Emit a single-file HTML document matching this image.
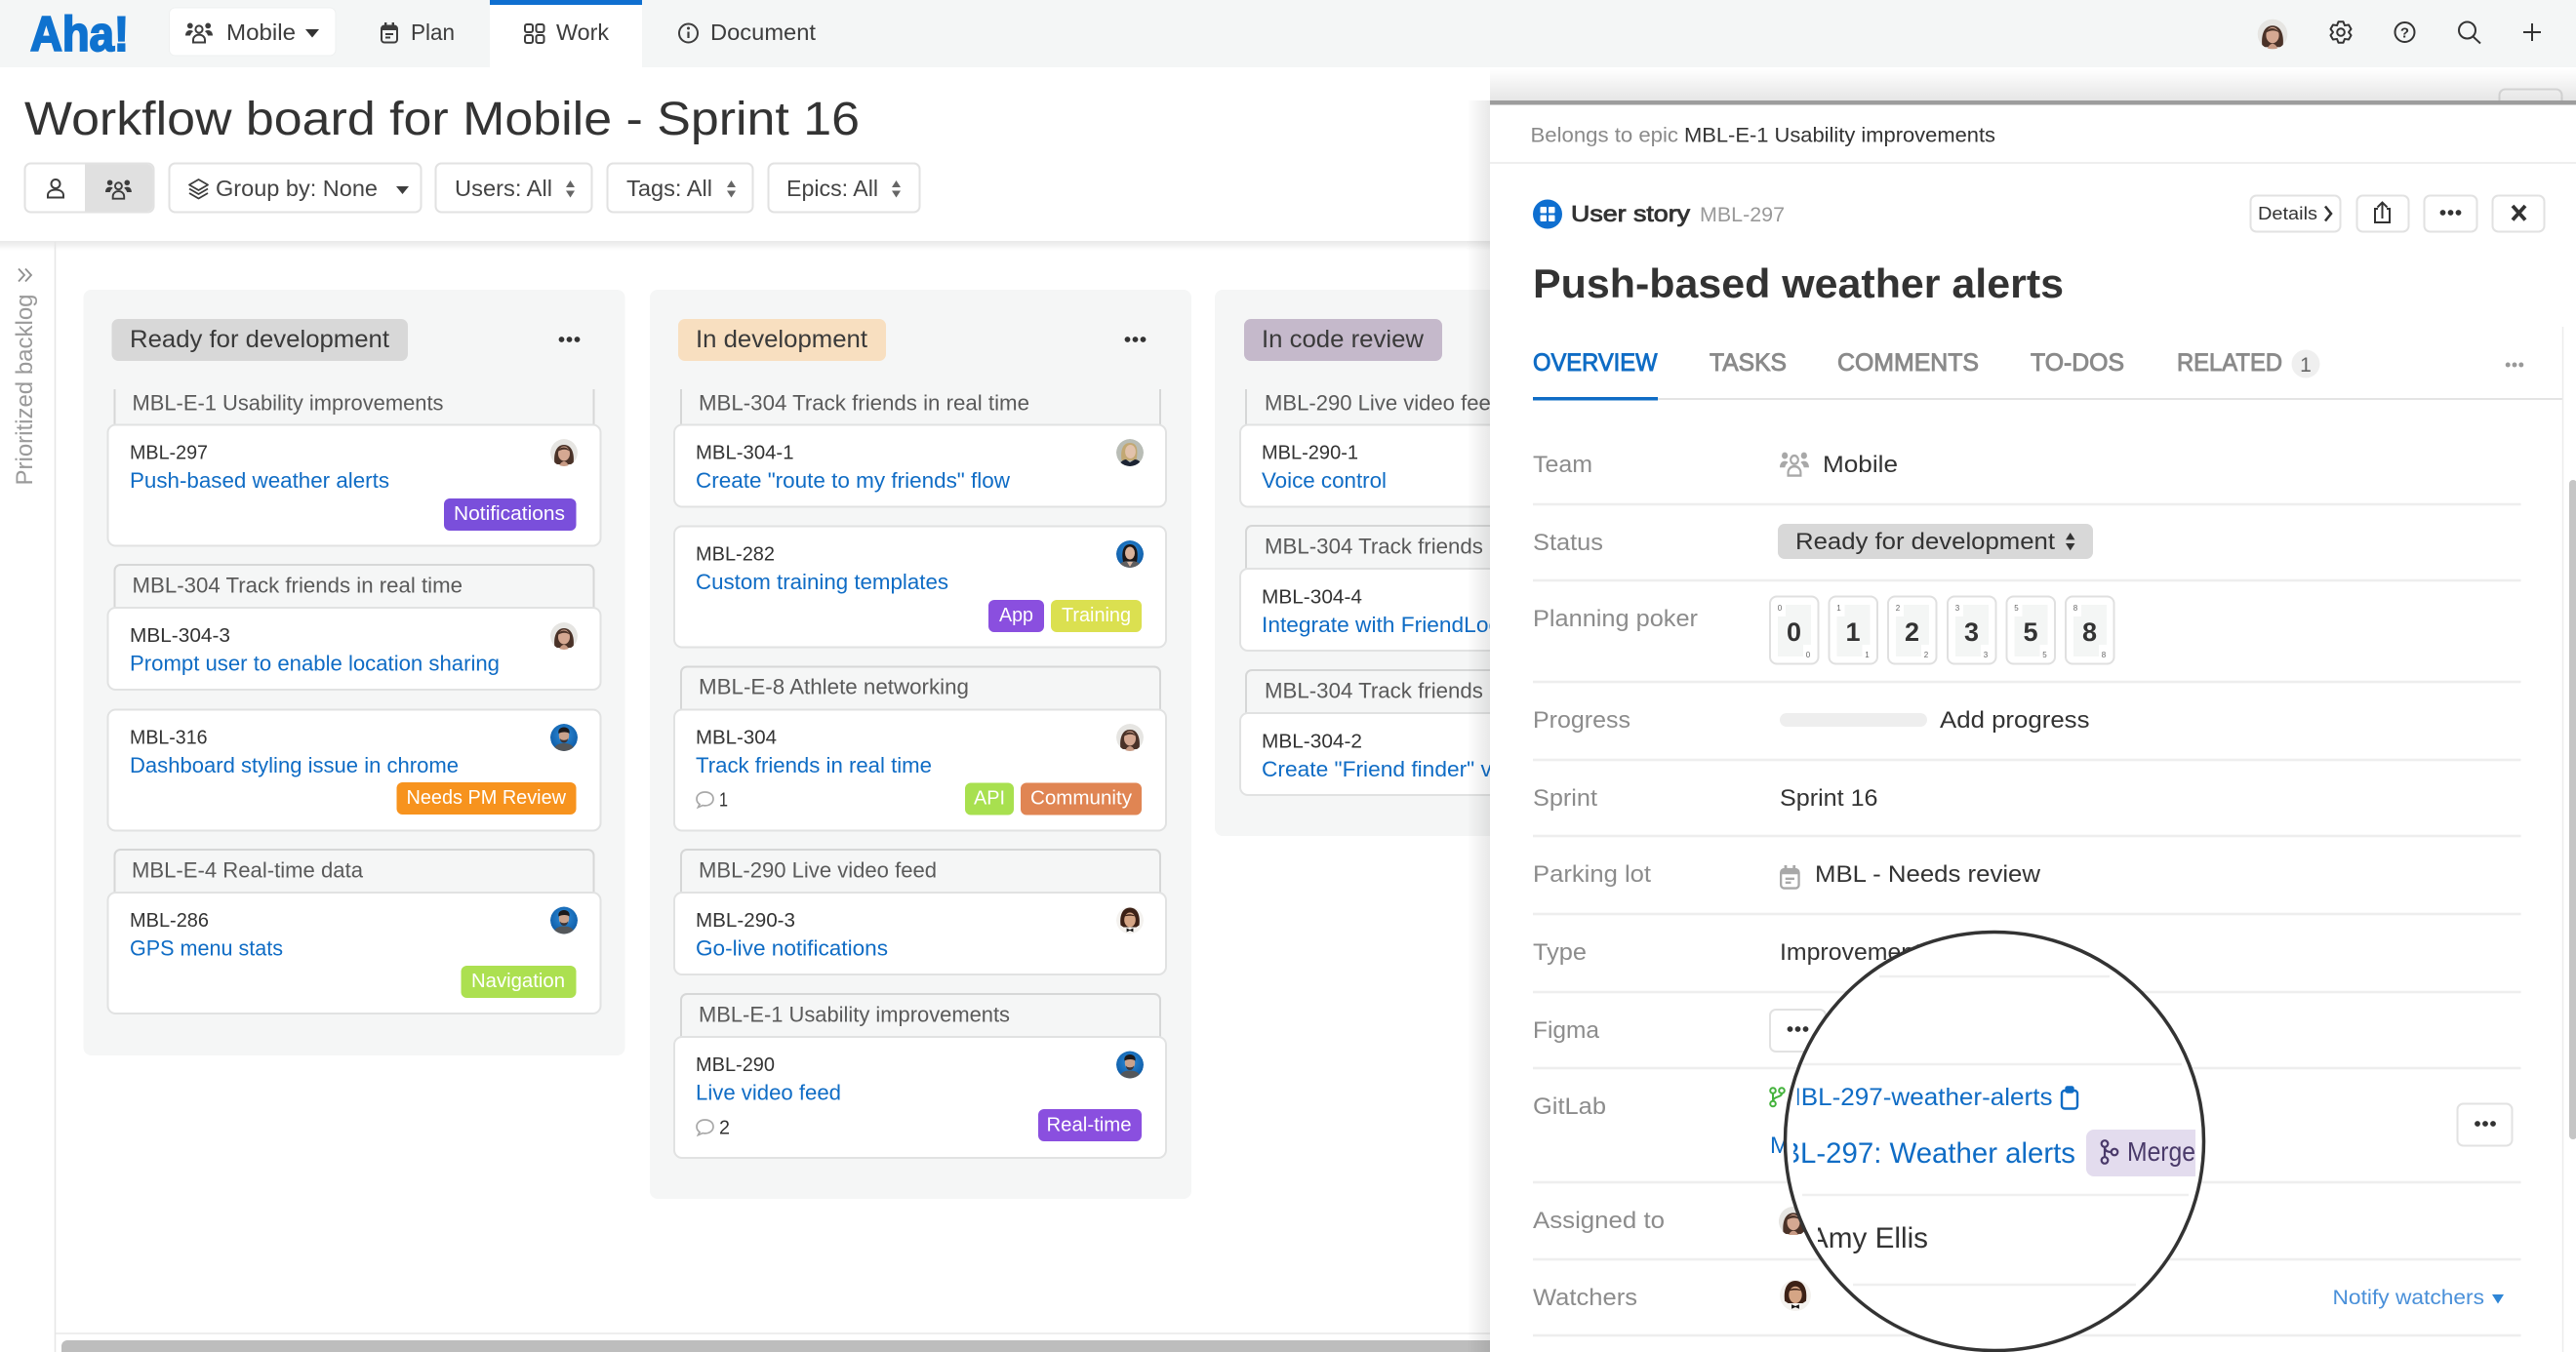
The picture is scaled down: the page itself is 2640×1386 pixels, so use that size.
<!DOCTYPE html>
<html lang="en"><head><meta charset="utf-8"><title>Workflow board for Mobile - Sprint 16</title>
<style>
html,body{margin:0;padding:0;width:2640px;height:1386px;overflow:hidden;background:#fff}
svg{display:block}
text{font-family:"Liberation Sans",Arial,sans-serif;fill:#333;white-space:pre}
.nav{font-size:23.5px;fill:#3d3d3d}
.tb{font-size:23.5px;fill:#444}
.ch{font-size:25px;fill:#3a3a3a}
.ep{font-size:22px;fill:#5a5a5a}
.id{font-size:20.5px;fill:#333}
.ln{font-size:22px;fill:#0f6cc5}
.tg{font-size:20px;fill:#fff}
.lb{font-size:24px;fill:#8c8c8c}
.vl{font-size:24.5px;fill:#333}
.tab{font-size:25px;fill:#8a8a8a;stroke:#8a8a8a;stroke-width:.9}
.c{fill:#fff;stroke:#e1e2e2;stroke-width:2}
.e{fill:#f5f6f6;stroke:#d6d7d7;stroke-width:2}
.b{fill:#fff;stroke:#e2e2e2;stroke-width:2}
.dv{stroke:#eeeeee;stroke-width:2.5}
.pk{fill:#fff;stroke:#e0e0e0;stroke-width:2}
.pi{fill:#f4f6f5}
.pn{font-size:27px;font-weight:700;fill:#333;text-anchor:middle}
.ps{font-size:8px;fill:#666;text-anchor:middle}
</style></head><body>
<svg xmlns="http://www.w3.org/2000/svg" width="2640" height="1386" viewBox="0 0 2640 1386">
<defs>
<linearGradient id="gs" x1="0" y1="0" x2="0" y2="1"><stop offset="0" stop-color="#000" stop-opacity=".09"/><stop offset="1" stop-color="#000" stop-opacity="0"/></linearGradient>
<linearGradient id="gl" x1="0" y1="0" x2="1" y2="0"><stop offset="0" stop-color="#000" stop-opacity="0"/><stop offset="1" stop-color="#000" stop-opacity=".09"/></linearGradient>
<linearGradient id="gt" x1="0" y1="0" x2="0" y2="1"><stop offset="0" stop-color="#000" stop-opacity="0"/><stop offset="1" stop-color="#000" stop-opacity=".1"/></linearGradient>
<radialGradient id="gb" cx=".5" cy=".4" r=".6"><stop offset="0" stop-color="#2f8fdc"/><stop offset="1" stop-color="#0d5aa5"/></radialGradient>
<clipPath id="av"><circle cx="0" cy="0" r="14"/></clipPath>
<clipPath id="mag"><circle cx="2044" cy="1170" r="214"/></clipPath>
<clipPath id="mrg"><rect x="2130" y="1150" width="120" height="64"/></clipPath>
<clipPath id="avcut"><rect x="1815" y="1230" width="60" height="36"/></clipPath>
<clipPath id="ln1"><rect x="1842" y="1100" width="300" height="50"/></clipPath>
<clipPath id="ln2"><rect x="1838" y="1155" width="300" height="50"/></clipPath>
<clipPath id="ln3"><rect x="1863" y="1250" width="200" height="45"/></clipPath>

<g id="d"><circle cx="-8" cy="0" r="2.9" fill="currentColor"/><circle cx="0" cy="0" r="2.9" fill="currentColor"/><circle cx="8" cy="0" r="2.9" fill="currentColor"/></g>

<g id="team" fill="currentColor"><circle cx="14" cy="7" r="3.6" fill="none" stroke="currentColor" stroke-width="2"/><path d="M8 20.5v-2.5c0-3.2 2.6-5.4 6-5.4s6 2.2 6 5.4v2.5z" fill="none" stroke="currentColor" stroke-width="2"/><circle cx="4.8" cy="3.4" r="2.9"/><circle cx="23.2" cy="3.4" r="2.9"/><path d="M0 13.5c0-3.4 2-5.500 4.8-5.500 1.300 0 2.400.4 3.200 1.200-1.600 1.100-2.600 2.600-3.100 4.300z"/><path d="M28 13.500c0-3.400-2-5.500-4.800-5.500-1.300 0-2.400.4-3.200 1.200 1.600 1.100 2.600 2.600 3.100 4.300z"/></g>

<g id="cal"><rect x="1" y="3.5" width="16" height="17" rx="3" fill="none" stroke="currentColor" stroke-width="2"/><path d="M1 8V6.500a3 3 0 0 1 3-3h10a3 3 0 0 1 3 3V8z" fill="currentColor"/><rect x="4" y="0" width="2.400" height="4" fill="currentColor"/><rect x="11.600" y="0" width="2.400" height="4" fill="currentColor"/><path d="M5 12h8M5 15.500h5" stroke="currentColor" stroke-width="2" fill="none"/></g>

<g id="sort" fill="currentColor"><path d="M0 7L4.500 0 9 7z"/><path d="M0 10.500L4.500 17.500 9 10.500z"/></g>

<g id="bubble"><path d="M10 1C5 1 1.500 4 1.500 8c0 2.400 1.200 4.300 3 5.500L3 16.600l4.600-2c.8.2 1.600.3 2.400.3 5 0 8.500-3 8.500-7S15 1 10 1z" fill="none" stroke="#a8a8a8" stroke-width="1.700"/></g>

<!-- Amy -->
<g id="a1"><g clip-path="url(#av)"><circle r="14" fill="#e6e5e2"/><path d="M-9.500 12C-11 2-8.500-8 0-8S11 2 9.500 12z" fill="#4a3228"/><ellipse cx="0" cy="1" rx="6" ry="7.500" fill="#d5a892"/><path d="M-6.500-1C-4-7 3-7 6.500-1 3-4-2-4-6.500-1z" fill="#4a3228"/><path d="M-5 14c1-3 3-5 5-5s4 2 5 5z" fill="#c79a84"/></g></g>
<!-- blue man -->
<g id="a2"><g clip-path="url(#av)"><circle r="14" fill="url(#gb)"/><path d="M-11 14c1-6 5-8 11-8s10 2 11 8z" fill="#54575a"/><ellipse cx="0" cy="-2" rx="5.200" ry="6.600" fill="#c9a28c"/><path d="M-5.500-4c-1-5 3-6.500 5.500-6.500s6.500 1.500 5.500 6.500c-2-2-8-2-11 0z" fill="#1c1a1c"/><path d="M-4 1c1 2.400 7 2.400 8 0 0 3-2 4.500-4 4.500s-4-1.500-4-4.500z" fill="#3a3437"/></g></g>
<!-- blonde -->
<g id="a3"><g clip-path="url(#av)"><circle r="14" fill="#b9bdb6"/><path d="M-8.500 8C-10-2-7.500-10 0-10S8.500-3 6.500 8z" fill="#c2a873"/><ellipse cx=".5" cy="-1" rx="5.400" ry="7" fill="#e2c2ab"/><path d="M-12 14c2-5 6-7 8-7l4 3 5-3c3 0 6 2 8 7z" fill="#1c2433"/></g></g>
<!-- woman blue bg -->
<g id="a4"><g clip-path="url(#av)"><circle r="14" fill="url(#gb)"/><path d="M-7 8C-9-2-7-10 0-10S9-2 7 8z" fill="#1b1718"/><ellipse cx="0" cy="-1" rx="5" ry="6.500" fill="#d9b29b"/><path d="M-12 14c1-5 5-7 12-7s11 2 12 7z" fill="#5e5e60"/><path d="M-3 8l3 5 3-5z" fill="#d9b7a3"/></g></g>
<!-- man bow tie -->
<g id="a5"><g clip-path="url(#av)"><circle r="14" fill="#f4f2ef"/><path d="M-9.500 5C-11-6-7-13 0-13S11-6 9.500 5l-3 2H-6.500z" fill="#3c2116"/><ellipse cx="0" cy="-.5" rx="5.800" ry="7.500" fill="#d5a585"/><path d="M-5.500-4c1-3 9-3 11 0-3-1-8-1-11 0z" fill="#3c2116"/><path d="M-3.400 8l3.400 1.600L3.400 8v4L0 10.400-3.400 12z" fill="#161616"/></g></g>
</defs>

<!-- base -->
<rect width="2640" height="1386" fill="#fff"/>

<!-- top nav -->
<rect width="2640" height="69" fill="#f4f6f6"/>
<text x="31" y="52" font-size="50" font-weight="700" style="fill:#0f72cf;stroke:#0f72cf;stroke-width:2" textLength="101" lengthAdjust="spacingAndGlyphs">Aha!</text>
<rect x="173.500" y="8" width="170.500" height="49" rx="6" fill="#fff" stroke="#eef0f0"/>
<use href="#team" x="190" y="23" style="color:#3d3d3d"/>
<text class="nav" x="232" y="41" textLength="71" lengthAdjust="spacingAndGlyphs">Mobile</text>
<path d="M313 30h14l-7 8.500z" fill="#333"/>
<use href="#cal" x="390" y="23" style="color:#3d3d3d"/>
<text class="nav" x="421" y="41" textLength="45" lengthAdjust="spacingAndGlyphs">Plan</text>
<rect x="502" y="0" width="156" height="69" fill="#fff"/>
<rect x="502" y="0" width="156" height="5" fill="#0f6fd0"/>
<g fill="none" stroke="#3d3d3d" stroke-width="2"><rect x="538" y="25" width="8" height="8" rx="2"/><rect x="549.500" y="25" width="8" height="8" rx="2"/><rect x="538" y="36" width="8" height="8" rx="2"/><rect x="549.500" y="36" width="8" height="8" rx="2"/></g>
<text class="nav" x="570" y="41" textLength="54" lengthAdjust="spacingAndGlyphs">Work</text>
<circle cx="705.500" cy="34" r="9.500" fill="none" stroke="#3d3d3d" stroke-width="2"/><path d="M705.500 32.500v6.500" stroke="#3d3d3d" stroke-width="2.200"/><circle cx="705.500" cy="29" r="1.500" fill="#3d3d3d"/>
<text class="nav" x="728" y="41" textLength="108" lengthAdjust="spacingAndGlyphs">Document</text>

<use href="#a1" transform="translate(2329,35) scale(1.1)"/>
<path transform="translate(2399,33)" d="M-4-6.930L-2.470-10.720L2.470-10.720L4-6.930L8.040-7.500L10.520-3.220L8 0L10.520 3.220L8.040 7.500L4 6.930L2.470 10.720L-2.470 10.720L-4 6.930L-8.040 7.500L-10.520 3.220L-8 0L-10.520-3.220L-8.040-7.500z" fill="none" stroke="#333" stroke-width="2" stroke-linejoin="round"/>
<circle cx="2399" cy="33" r="3.800" fill="none" stroke="#333" stroke-width="2"/>
<circle cx="2464.500" cy="33" r="10" fill="none" stroke="#333" stroke-width="2"/>
<text x="2464.500" y="38.500" font-size="15" font-weight="700" text-anchor="middle">?</text>
<circle cx="2528.500" cy="31" r="8.500" fill="none" stroke="#333" stroke-width="2"/><path d="M2534.500 37.500L2542 44.500" stroke="#333" stroke-width="2"/>
<path d="M2595 24v18M2586 33h18" stroke="#333" stroke-width="2"/>

<!-- title -->
<text x="25" y="138" font-size="48" style="fill:#333" textLength="856" lengthAdjust="spacingAndGlyphs">Workflow board for Mobile - Sprint 16</text>

<!-- toolbar -->
<rect x="25.500" y="167.500" width="132" height="50" rx="6" class="b"/>
<path d="M87 168.500h64.500a5 5 0 0 1 5 5v38a5 5 0 0 1-5 5H87z" fill="#e0e0e0"/>
<circle cx="57" cy="188.500" r="4.500" fill="none" stroke="#3d3d3d" stroke-width="2"/>
<path d="M49 202.500v-2.500c0-3 3-5.500 8-5.500s8 2.500 8 5.500v2.500z" fill="none" stroke="#3d3d3d" stroke-width="2"/>
<use href="#team" transform="translate(108,184) scale(.96)" style="color:#3d3d3d"/>
<rect x="173.500" y="167.500" width="258" height="50" rx="6" class="b"/>
<g fill="none" stroke="#3d3d3d" stroke-width="1.800" stroke-linejoin="round"><path d="M203.500 184l9.500 5.500-9.500 5.500-9.500-5.500z"/><path d="M194 193.500l9.500 5.500 9.500-5.500"/><path d="M194 198l9.500 5.500 9.500-5.500"/></g>
<text class="tb" x="221" y="201" textLength="166" lengthAdjust="spacingAndGlyphs">Group by: None</text>
<path d="M406 191h13l-6.500 8z" fill="#3d3d3d"/>
<rect x="446.500" y="167.500" width="160" height="50" rx="6" class="b"/>
<text class="tb" x="466" y="201" textLength="100" lengthAdjust="spacingAndGlyphs">Users: All</text>
<use href="#sort" x="580" y="185" style="color:#666"/>
<rect x="622.500" y="167.500" width="149" height="50" rx="6" class="b"/>
<text class="tb" x="642" y="201" textLength="88" lengthAdjust="spacingAndGlyphs">Tags: All</text>
<use href="#sort" x="745" y="185" style="color:#666"/>
<rect x="787.500" y="167.500" width="155" height="50" rx="6" class="b"/>
<text class="tb" x="806" y="201" textLength="94" lengthAdjust="spacingAndGlyphs">Epics: All</text>
<use href="#sort" x="914" y="185" style="color:#666"/>

<!-- header shadow -->
<rect x="0" y="247" width="2640" height="10" fill="url(#gs)"/>

<!-- sidebar -->
<path d="M56.500 248V1386" stroke="#e6e6e6" stroke-width="1.500"/>
<path d="M19 275.500l6 6.500-6 6.500M26 275.500l6 6.500-6 6.500" fill="none" stroke="#8f8f8f" stroke-width="1.800"/>
<text transform="translate(33,497.500) rotate(-90)" x="0" y="0" font-size="24" style="fill:#9a9a9a" textLength="196" lengthAdjust="spacingAndGlyphs">Prioritized backlog</text>

<!-- columns -->
<rect x="85.500" y="297" width="555" height="785" rx="8" fill="#f5f6f6"/>
<rect x="666" y="297" width="555" height="932" rx="8" fill="#f5f6f6"/>
<rect x="1245" y="297" width="400" height="560" rx="8" fill="#f5f6f6"/>

<rect x="114.500" y="327" width="303.500" height="43" rx="7" fill="#d8d8d8"/>
<text class="ch" x="133" y="356" textLength="266" lengthAdjust="spacingAndGlyphs">Ready for development</text>
<use href="#d" x="583.500" y="348" style="color:#333"/>
<rect x="695" y="327" width="213" height="43" rx="7" fill="#f8dfc0"/>
<text class="ch" x="713" y="356" textLength="176" lengthAdjust="spacingAndGlyphs">In development</text>
<use href="#d" x="1163.500" y="348" style="color:#333"/>
<rect x="1275" y="327" width="203" height="43" rx="7" fill="#c5b9cb"/>
<text class="ch" x="1293" y="356" textLength="166" lengthAdjust="spacingAndGlyphs">In code review</text>

<!-- Column 1 -->
<path d="M117.500 399v36M608.500 399v36" stroke="#d6d7d7" stroke-width="2"/>
<text class="ep" x="135.500" y="420.500" textLength="319" lengthAdjust="spacingAndGlyphs">MBL-E-1 Usability improvements</text>
<rect class="c" x="110.500" y="435.500" width="505" height="124" rx="8"/>
<text class="id" x="133" y="470.500" textLength="80" lengthAdjust="spacingAndGlyphs">MBL-297</text>
<text class="ln" x="133" y="500" textLength="266" lengthAdjust="spacingAndGlyphs">Push-based weather alerts</text>
<use href="#a1" x="578" y="464"/>
<rect x="455" y="511" width="135.500" height="33" rx="6" fill="#7a4fdb"/>
<text class="tg" x="465" y="533" textLength="114" lengthAdjust="spacingAndGlyphs">Notifications</text>

<rect class="e" x="117.500" y="579" width="491" height="60" rx="6"/>
<text class="ep" x="135.500" y="607.500" textLength="338.500" lengthAdjust="spacingAndGlyphs">MBL-304 Track friends in real time</text>
<rect class="c" x="110.500" y="623" width="505" height="84" rx="8"/>
<text class="id" x="133" y="658" textLength="103" lengthAdjust="spacingAndGlyphs">MBL-304-3</text>
<text class="ln" x="133" y="687.500" textLength="379" lengthAdjust="spacingAndGlyphs">Prompt user to enable location sharing</text>
<use href="#a1" x="578" y="652"/>

<rect class="c" x="110.500" y="727.500" width="505" height="124" rx="8"/>
<text class="id" x="133" y="762.500" textLength="79.500" lengthAdjust="spacingAndGlyphs">MBL-316</text>
<text class="ln" x="133" y="792" textLength="337" lengthAdjust="spacingAndGlyphs">Dashboard styling issue in chrome</text>
<use href="#a2" x="578" y="756"/>
<rect x="406.500" y="802" width="184" height="33" rx="6" fill="#f7931e"/>
<text class="tg" x="416.500" y="824" textLength="163.500" lengthAdjust="spacingAndGlyphs">Needs PM Review</text>

<rect class="e" x="117.500" y="871" width="491" height="60" rx="6"/>
<text class="ep" x="135" y="899.500" textLength="237" lengthAdjust="spacingAndGlyphs">MBL-E-4 Real-time data</text>
<rect class="c" x="110.500" y="915" width="505" height="124" rx="8"/>
<text class="id" x="133" y="950" textLength="81" lengthAdjust="spacingAndGlyphs">MBL-286</text>
<text class="ln" x="133" y="979.500" textLength="157" lengthAdjust="spacingAndGlyphs">GPS menu stats</text>
<use href="#a2" x="578" y="943.500"/>
<rect x="472.500" y="990" width="118" height="33" rx="6" fill="#ace050"/>
<text class="tg" x="483" y="1012" textLength="96" lengthAdjust="spacingAndGlyphs">Navigation</text>

<!-- Column 2 -->
<path d="M698 399v36M1189 399v36" stroke="#d6d7d7" stroke-width="2"/>
<text class="ep" x="716" y="420.500" textLength="339" lengthAdjust="spacingAndGlyphs">MBL-304 Track friends in real time</text>
<rect class="c" x="691" y="435.500" width="504" height="84" rx="8"/>
<text class="id" x="713" y="470.500" textLength="100.500" lengthAdjust="spacingAndGlyphs">MBL-304-1</text>
<text class="ln" x="713" y="500" textLength="322" lengthAdjust="spacingAndGlyphs">Create "route to my friends" flow</text>
<use href="#a3" x="1158" y="464"/>

<rect class="c" x="691" y="539.500" width="504" height="124" rx="8"/>
<text class="id" x="713" y="574.500" textLength="81" lengthAdjust="spacingAndGlyphs">MBL-282</text>
<text class="ln" x="713" y="604" textLength="259" lengthAdjust="spacingAndGlyphs">Custom training templates</text>
<use href="#a4" x="1158" y="568"/>
<rect x="1013" y="615" width="57" height="33" rx="6" fill="#8a4fdf"/>
<text class="tg" x="1024" y="637" textLength="35" lengthAdjust="spacingAndGlyphs">App</text>
<rect x="1077" y="615" width="93" height="33" rx="6" fill="#dbe050"/>
<text class="tg" x="1088" y="637" textLength="71" lengthAdjust="spacingAndGlyphs">Training</text>

<rect class="e" x="698" y="683.500" width="491" height="60" rx="6"/>
<text class="ep" x="716" y="711.500" textLength="277" lengthAdjust="spacingAndGlyphs">MBL-E-8 Athlete networking</text>
<rect class="c" x="691" y="727.500" width="504" height="124" rx="8"/>
<text class="id" x="713" y="762.500" textLength="83" lengthAdjust="spacingAndGlyphs">MBL-304</text>
<text class="ln" x="713" y="792" textLength="242" lengthAdjust="spacingAndGlyphs">Track friends in real time</text>
<use href="#a1" x="1158" y="756"/>
<use href="#bubble" x="712.500" y="811"/>
<text class="id" x="737" y="826.500" textLength="9" lengthAdjust="spacingAndGlyphs">1</text>
<rect x="989" y="802.500" width="50" height="33" rx="6" fill="#a8e04f"/>
<text class="tg" x="998" y="824.500" textLength="32" lengthAdjust="spacingAndGlyphs">API</text>
<rect x="1046" y="802.500" width="124" height="33" rx="6" fill="#e08553"/>
<text class="tg" x="1056" y="824.500" textLength="104" lengthAdjust="spacingAndGlyphs">Community</text>

<rect class="e" x="698" y="871" width="491" height="60" rx="6"/>
<text class="ep" x="716" y="899.500" textLength="244" lengthAdjust="spacingAndGlyphs">MBL-290 Live video feed</text>
<rect class="c" x="691" y="915" width="504" height="84" rx="8"/>
<text class="id" x="713" y="950" textLength="102" lengthAdjust="spacingAndGlyphs">MBL-290-3</text>
<text class="ln" x="713" y="979.500" textLength="197" lengthAdjust="spacingAndGlyphs">Go-live notifications</text>
<use href="#a5" x="1158" y="943.500"/>

<rect class="e" x="698" y="1019" width="491" height="60" rx="6"/>
<text class="ep" x="716" y="1047.500" textLength="319" lengthAdjust="spacingAndGlyphs">MBL-E-1 Usability improvements</text>
<rect class="c" x="691" y="1063" width="504" height="124" rx="8"/>
<text class="id" x="713" y="1098" textLength="81" lengthAdjust="spacingAndGlyphs">MBL-290</text>
<text class="ln" x="713" y="1127.500" textLength="149" lengthAdjust="spacingAndGlyphs">Live video feed</text>
<use href="#a2" x="1158" y="1091.500"/>
<use href="#bubble" x="712.500" y="1147"/>
<text class="id" x="737" y="1162.500" textLength="11" lengthAdjust="spacingAndGlyphs">2</text>
<rect x="1064" y="1137" width="106" height="33" rx="6" fill="#8a4fdf"/>
<text class="tg" x="1072.500" y="1159.500" textLength="87" lengthAdjust="spacingAndGlyphs">Real-time</text>

<!-- Column 3 -->
<path d="M1277 399v36" stroke="#d6d7d7" stroke-width="2"/>
<text class="ep" x="1296" y="420.500" textLength="244" lengthAdjust="spacingAndGlyphs">MBL-290 Live video feed</text>
<rect class="c" x="1271" y="435.500" width="504" height="84" rx="8"/>
<text class="id" x="1293" y="470.500" textLength="99" lengthAdjust="spacingAndGlyphs">MBL-290-1</text>
<text class="ln" x="1293" y="500" textLength="128" lengthAdjust="spacingAndGlyphs">Voice control</text>

<rect class="e" x="1277" y="539" width="491" height="60" rx="6"/>
<text class="ep" x="1296" y="567.500" textLength="339" lengthAdjust="spacingAndGlyphs">MBL-304 Track friends in real time</text>
<rect class="c" x="1271" y="583" width="504" height="84" rx="8"/>
<text class="id" x="1293" y="618.500" textLength="103" lengthAdjust="spacingAndGlyphs">MBL-304-4</text>
<text class="ln" x="1293" y="648" textLength="283" lengthAdjust="spacingAndGlyphs">Integrate with FriendLocator</text>

<rect class="e" x="1277" y="687" width="491" height="60" rx="6"/>
<text class="ep" x="1296" y="715.500" textLength="339" lengthAdjust="spacingAndGlyphs">MBL-304 Track friends in real time</text>
<rect class="c" x="1271" y="731" width="504" height="84" rx="8"/>
<text class="id" x="1293" y="766.500" textLength="103" lengthAdjust="spacingAndGlyphs">MBL-304-2</text>
<text class="ln" x="1293" y="796" textLength="270" lengthAdjust="spacingAndGlyphs">Create "Friend finder" view</text>

<!-- bottom scrollbar -->
<path d="M57 1367H1530" stroke="#e8e8e8" stroke-width="1.500"/>
<path d="M63 1386v-6a6 6 0 0 1 6-6H1530v12z" fill="#bdbdbd"/>

<!-- panel shadows -->
<rect x="1503" y="103" width="24" height="1283" fill="url(#gl)"/>
<rect x="2561.500" y="91.500" width="64" height="20" rx="6" fill="#fff" stroke="#e2e2e2" stroke-width="2"/>
<rect x="1527" y="70" width="1113" height="33" fill="url(#gt)"/>

<!-- panel -->
<rect x="1527" y="103" width="1113" height="1283" fill="#fff"/>
<rect x="1527" y="103" width="1113" height="4.500" fill="#9d9d9d"/>
<text x="1568.500" y="145.500" font-size="21" style="fill:#8a8a8a" textLength="151.500" lengthAdjust="spacingAndGlyphs">Belongs to epic</text>
<text x="1726" y="145.500" font-size="21" style="fill:#333" textLength="319" lengthAdjust="spacingAndGlyphs">MBL-E-1 Usability improvements</text>
<path d="M1527 167H2640" stroke="#efefef" stroke-width="2"/>

<circle cx="1586" cy="219.500" r="15" fill="#0f6fd0"/>
<g fill="#fff"><rect x="1578.500" y="212" width="6.500" height="6.500" rx="1"/><rect x="1587" y="212" width="6.500" height="6.500" rx="1"/><rect x="1578.500" y="220.500" width="6.500" height="6.500" rx="1"/><rect x="1587" y="220.500" width="6.500" height="6.500" rx="1"/></g>
<text x="1610" y="227" font-size="23" style="fill:#333;stroke:#333;stroke-width:.8" textLength="122" lengthAdjust="spacingAndGlyphs">User story</text>
<text x="1742" y="227" font-size="21" style="fill:#999" textLength="87" lengthAdjust="spacingAndGlyphs">MBL-297</text>

<rect class="b" x="2306.500" y="200.500" width="92" height="37" rx="6"/>
<text x="2314" y="225" font-size="18.500" style="fill:#333" textLength="61" lengthAdjust="spacingAndGlyphs">Details</text>
<path d="M2383 211.500l6 7.500-6 7.500" fill="none" stroke="#333" stroke-width="2.600"/>
<rect class="b" x="2415.500" y="200.500" width="53" height="37" rx="6"/>
<path d="M2437 214h-3v14h15v-14h-3M2441.500 224v-16M2436.500 212.500l5-5 5 5" fill="none" stroke="#333" stroke-width="2"/>
<rect class="b" x="2484.500" y="200.500" width="54" height="37" rx="6"/>
<use href="#d" x="2511.500" y="218" style="color:#333"/>
<rect class="b" x="2554.500" y="200.500" width="53" height="37" rx="6"/>
<path d="M2575 211l13 14.500M2588 211l-13 14.500" stroke="#333" stroke-width="3.800" fill="none"/>

<text x="1571" y="305" font-size="42" font-weight="700" style="fill:#333" textLength="544" lengthAdjust="spacingAndGlyphs">Push-based weather alerts</text>

<text class="tab" x="1571" y="380" style="fill:#0f6cc5;stroke:#0f6cc5" textLength="127.500" lengthAdjust="spacingAndGlyphs">OVERVIEW</text>
<text class="tab" x="1752" y="380" textLength="79" lengthAdjust="spacingAndGlyphs">TASKS</text>
<text class="tab" x="1883" y="380" textLength="145" lengthAdjust="spacingAndGlyphs">COMMENTS</text>
<text class="tab" x="2081" y="380" textLength="96" lengthAdjust="spacingAndGlyphs">TO-DOS</text>
<text class="tab" x="2231" y="380" textLength="108" lengthAdjust="spacingAndGlyphs">RELATED</text>
<circle cx="2363" cy="373" r="14.500" fill="#efefef"/>
<text x="2363" y="381" font-size="21" text-anchor="middle" style="fill:#666">1</text>
<use href="#d" transform="translate(2577,374) scale(.85)" style="color:#999"/>
<path d="M1571 409H2626" stroke="#e4e4e4" stroke-width="2"/>
<rect x="1571" y="407" width="128" height="3.500" fill="#0f6cc5"/>

<!-- side scrollbar -->
<path d="M2626.500 335V1386" stroke="#ececec" stroke-width="1.500"/>
<rect x="2633" y="492" width="8" height="676" rx="4" fill="#c6c6c6"/>

<!-- dividers -->
<g class="dv"><path class="dv" d="M1571 517H2583.500"/><path class="dv" d="M1571 595H2583.500"/><path class="dv" d="M1571 699H2583.500"/><path class="dv" d="M1571 779H2583.500"/><path class="dv" d="M1571 857H2583.500"/><path class="dv" d="M1571 937H2583.500"/><path class="dv" d="M1571 1017H2583.500"/><path class="dv" d="M1571 1095H2583.500"/><path class="dv" d="M1571 1212H2583.500"/><path class="dv" d="M1571 1291H2583.500"/><path class="dv" d="M1571 1369H2583.500"/></g>

<!-- labels -->
<text class="lb" x="1571" y="484" textLength="61" lengthAdjust="spacingAndGlyphs">Team</text>
<text class="lb" x="1571" y="564" textLength="72" lengthAdjust="spacingAndGlyphs">Status</text>
<text class="lb" x="1571" y="642" textLength="169" lengthAdjust="spacingAndGlyphs">Planning poker</text>
<text class="lb" x="1571" y="746" textLength="100" lengthAdjust="spacingAndGlyphs">Progress</text>
<text class="lb" x="1571" y="826" textLength="66" lengthAdjust="spacingAndGlyphs">Sprint</text>
<text class="lb" x="1571" y="904" textLength="121" lengthAdjust="spacingAndGlyphs">Parking lot</text>
<text class="lb" x="1571" y="984" textLength="55" lengthAdjust="spacingAndGlyphs">Type</text>
<text class="lb" x="1571" y="1064" textLength="68" lengthAdjust="spacingAndGlyphs">Figma</text>
<text class="lb" x="1571" y="1142" textLength="75" lengthAdjust="spacingAndGlyphs">GitLab</text>
<text class="lb" x="1571" y="1259" textLength="135" lengthAdjust="spacingAndGlyphs">Assigned to</text>
<text class="lb" x="1571" y="1338" textLength="107" lengthAdjust="spacingAndGlyphs">Watchers</text>

<!-- values -->
<use href="#team" transform="translate(1824,463) scale(1.07,1.2)" style="color:#a8a8a8"/>
<text class="vl" x="1868" y="484" textLength="77" lengthAdjust="spacingAndGlyphs">Mobile</text>
<rect x="1822" y="537" width="323" height="36" rx="7" fill="#d8d8d8"/>
<text class="vl" x="1840" y="563" textLength="266" lengthAdjust="spacingAndGlyphs">Ready for development</text>
<use href="#sort" transform="translate(2117,546) scale(1.05)" style="color:#333"/>

<g>
<rect class="pk" x="1814" y="611.500" width="49.500" height="69" rx="7"/><path class="pi" d="M1830 620H1856V661H1848V673H1822V632H1830z"/>
<text class="pn" x="1838.500" y="657">0</text><text class="ps" x="1824" y="626">0</text><text class="ps" x="1853" y="674">0</text>
<rect class="pk" x="1874.500" y="611.500" width="49.500" height="69" rx="7"/><path class="pi" d="M1890.500 620H1916.500V661H1908.500V673H1882.500V632H1890.500z"/>
<text class="pn" x="1899" y="657">1</text><text class="ps" x="1884.500" y="626">1</text><text class="ps" x="1913.500" y="674">1</text>
<rect class="pk" x="1935" y="611.500" width="49.500" height="69" rx="7"/><path class="pi" d="M1951 620H1977V661H1969V673H1943V632H1951z"/>
<text class="pn" x="1959.500" y="657">2</text><text class="ps" x="1945" y="626">2</text><text class="ps" x="1974" y="674">2</text>
<rect class="pk" x="1996" y="611.500" width="49.500" height="69" rx="7"/><path class="pi" d="M2012 620H2038V661H2030V673H2004V632H2012z"/>
<text class="pn" x="2020.500" y="657">3</text><text class="ps" x="2006" y="626">3</text><text class="ps" x="2035" y="674">3</text>
<rect class="pk" x="2056.500" y="611.500" width="49.500" height="69" rx="7"/><path class="pi" d="M2072.500 620H2098.500V661H2090.500V673H2064.500V632H2072.500z"/>
<text class="pn" x="2081" y="657">5</text><text class="ps" x="2066.500" y="626">5</text><text class="ps" x="2095.500" y="674">5</text>
<rect class="pk" x="2117" y="611.500" width="49.500" height="69" rx="7"/><path class="pi" d="M2133 620H2159V661H2151V673H2125V632H2133z"/>
<text class="pn" x="2141.500" y="657">8</text><text class="ps" x="2127" y="626">8</text><text class="ps" x="2156" y="674">8</text>
</g>

<rect x="1824" y="731" width="151" height="14" rx="7" fill="#eeeeee"/>
<text class="vl" x="1988" y="746" textLength="153.500" lengthAdjust="spacingAndGlyphs">Add progress</text>
<text class="vl" x="1824" y="826" textLength="100.500" lengthAdjust="spacingAndGlyphs">Sprint 16</text>
<use href="#cal" transform="translate(1824,887) scale(1.15)" style="color:#a8a8a8"/>
<text class="vl" x="1860" y="904" textLength="231" lengthAdjust="spacingAndGlyphs">MBL - Needs review</text>
<text class="vl" x="1824" y="984" textLength="145" lengthAdjust="spacingAndGlyphs">Improvement</text>

<rect class="b" x="1814" y="1035" width="57" height="43" rx="6"/>
<use href="#d" x="1842.500" y="1055" style="color:#333"/>

<!-- branch green -->
<g fill="none" stroke="#44b23c" stroke-width="2"><circle cx="1817" cy="1118" r="2.800"/><circle cx="1826" cy="1118" r="2.800"/><circle cx="1817" cy="1131.500" r="2.800"/><path d="M1817 1121v8M1826 1121c0 4-9 3-9 8"/></g>
<text x="1814" y="1182" font-size="24" style="fill:#0f6cc5">M</text>

<rect class="b" x="2518.500" y="1131.500" width="56" height="43" rx="6"/>
<use href="#d" x="2547" y="1152" style="color:#333"/>

<g clip-path="url(#avcut)"><use href="#a1" transform="translate(1838,1252) scale(1.08)"/></g>
<use href="#a5" transform="translate(1840,1328) scale(1.15)"/>

<text x="2390.500" y="1337" font-size="21.500" style="fill:#4a90d9" textLength="155.500" lengthAdjust="spacingAndGlyphs">Notify watchers</text>
<path d="M2554 1327h12l-6 9.500z" fill="#2f86d6"/>

<!-- magnifier -->
<circle cx="2044" cy="1170" r="214.500" fill="#fff"/>
<g clip-path="url(#mag)">
<path d="M1926 1001H2162M1830 1091H2236M1847 1225H2243M1899 1317H2189" stroke="#efefef" stroke-width="2.500"/>
<g clip-path="url(#ln1)"><text x="1824" y="1133" font-size="25" style="fill:#0f6cc5" textLength="279.500" lengthAdjust="spacingAndGlyphs">MBL-297-weather-alerts</text></g>
<g fill="none" stroke="#0f6cc5" stroke-width="2.400"><rect x="2113" y="1118" width="16" height="18.500" rx="3"/><rect x="2117.500" y="1114.500" width="7" height="5" rx="1.200" fill="#0f6cc5"/></g>
<g clip-path="url(#ln2)"><text x="1801" y="1192" font-size="30" style="fill:#0f6cc5" textLength="326" lengthAdjust="spacingAndGlyphs">MBL-297: Weather alerts</text></g>
<g clip-path="url(#mrg)">
<rect x="2138" y="1158" width="130" height="48" rx="8" fill="#e3dcee"/>
<g fill="none" stroke="#4a3a6a" stroke-width="2.200"><circle cx="2157" cy="1172.500" r="3.300"/><circle cx="2157" cy="1189.500" r="3.300"/><circle cx="2167" cy="1181" r="3.300"/><path d="M2157 1176v10M2157 1176c0 4 3 5 6.800 5"/></g>
<text x="2180" y="1190" font-size="28" style="fill:#4a3a6a" textLength="70" lengthAdjust="spacingAndGlyphs">Merge</text>
</g>
<g clip-path="url(#ln3)"><text x="1854" y="1279" font-size="30" style="fill:#333" textLength="122" lengthAdjust="spacingAndGlyphs">Amy Ellis</text></g>
</g>
<circle cx="2044" cy="1170" r="214.500" fill="none" stroke="#333" stroke-width="3.500"/>
</svg>
</body></html>
